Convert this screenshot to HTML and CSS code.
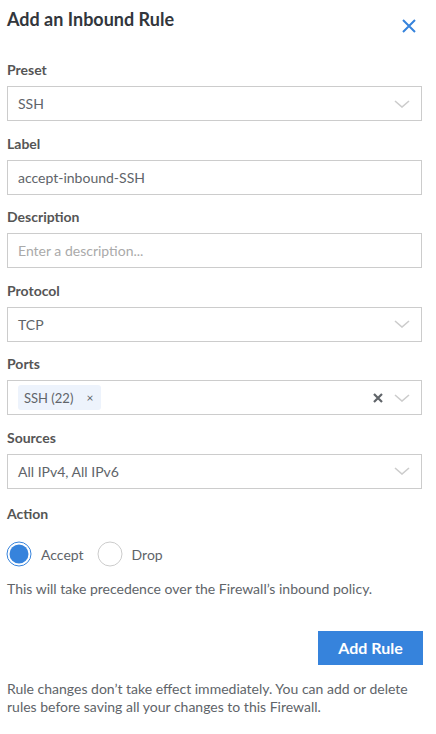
FILE: index.html
```html
<!DOCTYPE html>
<html lang="en">
<head>
<meta charset="utf-8">
<title>Add an Inbound Rule</title>
<link rel="stylesheet" href="styles.css">
</head>
<body>
<div class="drawer">
  <div class="header">
    <h2 class="title">Add an Inbound Rule</h2>
    <button class="close" aria-label="Close">
      <svg width="14" height="14" viewBox="0 0 14 14"><path d="M1 1L13 13M13 1L1 13" stroke="#3683dc" stroke-width="2" fill="none"/></svg>
    </button>
  </div>

  <div class="field">
    <div class="label">Preset</div>
    <div class="box">
      <span class="value">SSH</span>
      <span class="icons"><svg class="chev" width="16" height="8" viewBox="0 0 16 8"><path d="M1 1L8 7L15 1" stroke="#cccccc" stroke-width="1.6" fill="none"/></svg></span>
    </div>
  </div>

  <div class="field">
    <div class="label">Label</div>
    <div class="box"><span class="value">accept-inbound-SSH</span></div>
  </div>

  <div class="field">
    <div class="label">Description</div>
    <div class="box"><span class="value placeholder">Enter a description...</span></div>
  </div>

  <div class="field">
    <div class="label">Protocol</div>
    <div class="box">
      <span class="value">TCP</span>
      <span class="icons"><svg class="chev" width="16" height="8" viewBox="0 0 16 8"><path d="M1 1L8 7L15 1" stroke="#cccccc" stroke-width="1.6" fill="none"/></svg></span>
    </div>
  </div>

  <div class="field">
    <div class="label">Ports</div>
    <div class="box">
      <span class="chip">SSH (22)<span class="chip-x">×</span></span>
      <span class="icons">
        <svg class="clear" width="10" height="10" viewBox="0 0 10 10"><path d="M1 1L9 9M9 1L1 9" stroke="#606469" stroke-width="2.2" fill="none"/></svg>
        <svg class="chev" width="16" height="8" viewBox="0 0 16 8"><path d="M1 1L8 7L15 1" stroke="#cccccc" stroke-width="1.6" fill="none"/></svg>
      </span>
    </div>
  </div>

  <div class="field">
    <div class="label">Sources</div>
    <div class="box">
      <span class="value">All IPv4, All IPv6</span>
      <span class="icons"><svg class="chev" width="16" height="8" viewBox="0 0 16 8"><path d="M1 1L8 7L15 1" stroke="#cccccc" stroke-width="1.6" fill="none"/></svg></span>
    </div>
  </div>

  <div class="label action-label">Action</div>
  <div class="radios">
    <label class="radio">
      <svg width="26" height="26" viewBox="0 0 26 26"><circle cx="13" cy="13" r="12" fill="#fff" stroke="#3683dc" stroke-width="1"/><circle cx="13" cy="13" r="9.5" fill="#3683dc"/></svg>
      <span>Accept</span>
    </label>
    <label class="radio">
      <svg width="26" height="26" viewBox="0 0 26 26"><circle cx="13" cy="13" r="12" fill="#fff" stroke="#cccccc" stroke-width="1"/></svg>
      <span>Drop</span>
    </label>
  </div>

  <p class="help">This will take precedence over the Firewall’s inbound policy.</p>

  <div class="actions">
    <button class="primary">Add Rule</button>
  </div>

  <p class="note">Rule changes don’t take effect immediately. You can add or delete rules before saving all your changes to this Firewall.</p>
</div>
</body>
</html>
```

FILE: styles.css
```css
* { box-sizing: border-box; }

html, body {
  margin: 0;
  padding: 0;
  background: #ffffff;
}

body {
  font-family: Lato, "Noto Sans", sans-serif;
  color: #606469;
}

.drawer {
  width: 436px;
  padding: 7px 14px 0 7px;
}

.header {
  display: flex;
  justify-content: space-between;
  align-items: flex-start;
  margin-bottom: 28px;
}

.title {
  margin: 0;
  font-size: 18px;
  line-height: 24px;
  font-weight: 700;
  color: #32363c;
}

.close {
  border: 0;
  background: none;
  padding: 0;
  margin: 12px 6px 0 0;
  width: 14px;
  height: 14px;
  display: flex;
}

.field {
  margin-bottom: 13.6px;
}

.label {
  font-size: 14px;
  line-height: 18px;
  font-weight: 700;
  color: #555555;
  margin-bottom: 7px;
}

.box {
  height: 35px;
  border: 1px solid #cccccc;
  display: flex;
  align-items: center;
  justify-content: space-between;
  padding: 0 11px 0 10px;
}

.value {
  font-size: 14px;
  color: #606469;
}

.placeholder {
  color: #aaaaaa;
}

.icons {
  display: flex;
  align-items: center;
  gap: 11px;
}

.chev, .clear {
  display: block;
}

.chip {
  display: flex;
  align-items: center;
  height: 25px;
  padding: 0 8px 0 6px;
  background: #edf3fc;
  border-radius: 3px;
  font-size: 13px;
  color: #606469;
}

.chip-x {
  margin-left: 13px;
  font-size: 12px;
  color: #606469;
}

.action-label {
  margin-top: 15.6px;
  margin-bottom: 18.5px;
}

.radios {
  display: flex;
  align-items: center;
  gap: 13px;
  margin-left: -1px;
}

.radio {
  display: flex;
  align-items: center;
  gap: 9px;
  font-size: 14px;
  color: #606469;
}

.radio svg {
  display: block;
}

.help {
  margin: 12.5px 0 0;
  font-size: 14px;
  line-height: 18px;
  color: #606469;
}

.actions {
  display: flex;
  justify-content: flex-end;
  margin: 33px -1px 0 0;
}

.primary {
  width: 105px;
  height: 34px;
  border: 0;
  background: #3683dc;
  color: #ffffff;
  font-family: Lato, "Noto Sans", sans-serif;
  font-weight: 700;
  font-size: 16px;
  padding: 0;
}

.note {
  margin: 15px 0 0;
  font-size: 14px;
  line-height: 18px;
  color: #606469;
}
```
